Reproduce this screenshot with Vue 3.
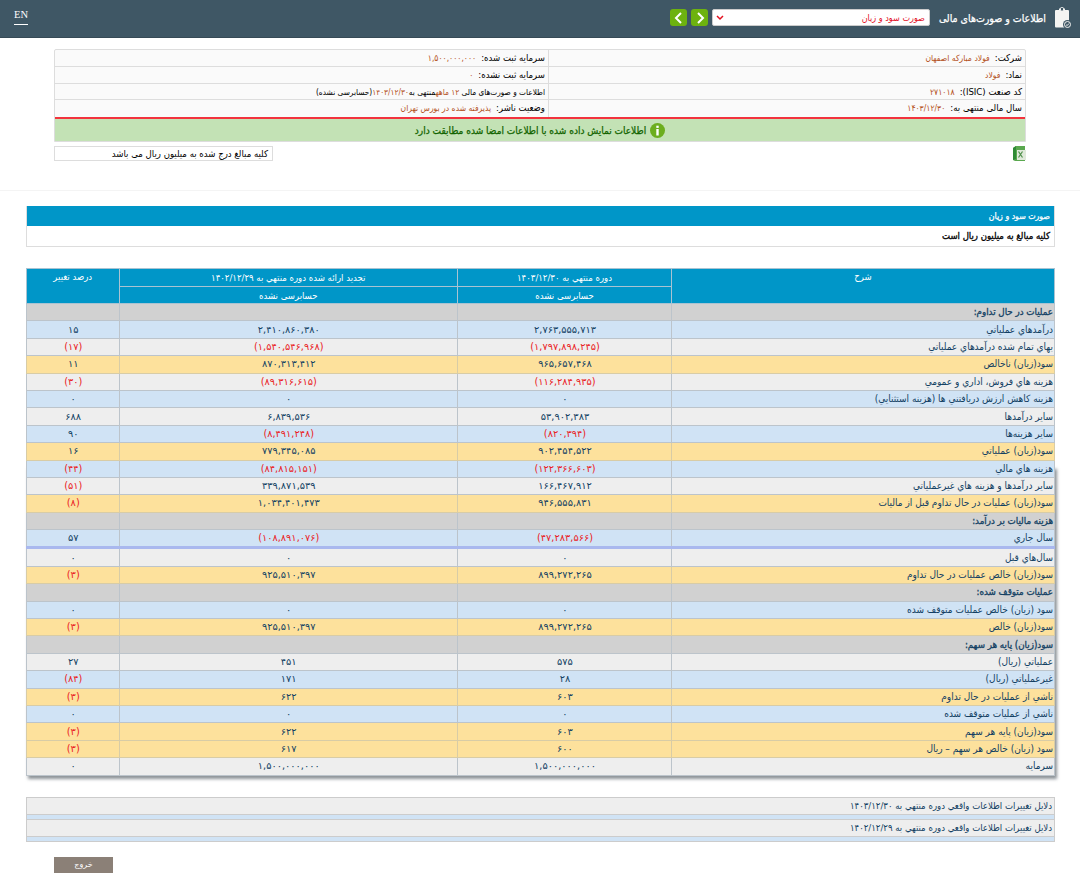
<template>
  <div class="page" dir="rtl">
    <header class="topbar">
      <svg class="clip" width="18" height="22" viewBox="0 0 18 22">
        <path d="M2 3h3V1.500h6V3h3a1 1 0 0 1 1 1v15.500a1 1 0 0 1-1 1H2a1 1 0 0 1-1-1V4a1 1 0 0 1 1-1z" fill="#f4f4f2" />
        <rect x="6.500" y="0.500" width="3" height="3.500" rx="1" fill="#3f5765" stroke="#f4f4f2" />
        <circle cx="13.500" cy="17.500" r="4.500" fill="#3f5765" />
        <circle cx="13.500" cy="17.500" r="3" fill="none" stroke="#f4f4f2" />
        <path d="M12.200 17.800l1 .8 1.600-2" fill="none" stroke="#f4f4f2" />
      </svg>
      <span class="title">اطلاعات و صورت‌های مالی</span>
      <div class="select">
        <span>صورت سود و زیان</span>
        <svg width="8" height="6" viewBox="0 0 8 6"><path d="M1 1l3 3 3-3" fill="none" stroke="#e3101f" stroke-width="1.500" /></svg>
      </div>
      <button class="nav">
        <svg width="10" height="12" viewBox="0 0 10 12"><path d="M3 1l5 5-5 5" fill="none" stroke="#fff" stroke-width="2" /></svg>
      </button>
      <button class="nav">
        <svg width="10" height="12" viewBox="0 0 10 12"><path d="M7 1L2 6l5 5" fill="none" stroke="#fff" stroke-width="2" /></svg>
      </button>
      <a class="lang">EN</a>
    </header>

    <section class="info">
      <div class="info-row" v-for="row in infoRows" :key="row[0]">
        <div class="info-cell"><b>{{ row[0] }}</b><span class="val">{{ row[1] }}</span></div>
        <div class="info-cell" v-if="row[2]"><b>{{ row[2] }}</b><span class="val">{{ row[3] }}</span></div>
        <div class="info-cell small" v-else>
          اطلاعات و صورت‌های مالی <span class="val">۱۲ ماهه</span>منتهی به<span class="val">۱۴۰۳/۱۲/۳۰</span>(حسابرسی نشده)
        </div>
      </div>
      <div class="notice">
        <svg width="15" height="15" viewBox="0 0 15 15">
          <circle cx="7.500" cy="7.500" r="7.500" fill="#6cae1e" />
          <rect x="6.300" y="6" width="2.400" height="6.500" fill="#fff" />
          <rect x="6.300" y="2.700" width="2.400" height="2.200" fill="#fff" />
        </svg>
        <span>اطلاعات نمایش داده شده با اطلاعات امضا شده مطابقت دارد</span>
      </div>
    </section>

    <div class="tools">
      <svg width="14" height="15" viewBox="0 0 14 15">
        <path d="M1 2l3-2h9v15H3l-2-1z" fill="#5aa84f" />
        <path d="M1 2l3-2v13l-3 1z" fill="#2f8a35" />
        <rect x="5" y="4" width="9" height="10" fill="#dfe9da" />
        <path d="M6.500 5.500l4 6M10.500 5.500l-4 6" stroke="#4e8f4a" stroke-width="1.200" />
      </svg>
      <div class="unit">کلیه مبالغ درج شده به میلیون ریال می باشد</div>
    </div>

    <div class="sep"></div>

    <section class="report">
      <h2>صورت سود و زیان</h2>
      <p>کلیه مبالغ به میلیون ریال است</p>
    </section>

    <div class="table-wrap">
      <table class="sheet">
        <colgroup>
          <col class="c1" />
          <col class="c2" />
          <col class="c3" />
          <col class="c4" />
        </colgroup>
        <thead>
          <tr class="first">
            <th rowspan="2" class="top">شرح</th>
            <th>دوره منتهي به ۱۴۰۳/۱۲/۳۰</th>
            <th>تجديد ارائه شده دوره منتهي به ۱۴۰۲/۱۲/۲۹</th>
            <th rowspan="2" class="top">درصد تغيير</th>
          </tr>
          <tr>
            <th>حسابرسی نشده</th>
            <th>حسابرسی نشده</th>
          </tr>
        </thead>
        <tbody>
          <tr v-for="row in rows" :key="row.label" :class="[row.kind, { mark: row.mark }]">
            <td class="label">{{ row.label }}</td>
            <td v-for="(v, i) in row.values" :key="i" class="num" :class="{ neg: v.startsWith('(') }">{{ v }}</td>
          </tr>
        </tbody>
      </table>
    </div>

    <section class="reasons">
      <div class="reason" v-for="r in reasons" :key="r">
        <div class="reason-text">{{ r }}</div>
        <div class="reason-foot"></div>
      </div>
    </section>

    <div class="actions">
      <button class="exit">خروج</button>
    </div>
  </div>
</template>

<script setup>
const infoRows = [
  ['شرکت:', 'فولاد مبارکه اصفهان', 'سرمایه ثبت شده:', '۱,۵۰۰,۰۰۰,۰۰۰'],
  ['نماد:', 'فولاد', 'سرمایه ثبت نشده:', '۰'],
  ['کد صنعت (ISIC):', '۲۷۱۰۱۸'],
  ['سال مالی منتهی به:', '۱۴۰۳/۱۲/۳۰', 'وضعیت ناشر:', 'پذیرفته شده در بورس تهران']
]

const r = (kind, label, a, b, c, mark) => ({ kind, label, values: [a, b, c], mark })
const head = (label) => r('head', label, '', '', '')

const rows = [
  head('عمليات در حال تداوم:'),
  r('blue', 'درآمدهاي عملياتي', '۲,۷۶۳,۵۵۵,۷۱۳', '۲,۴۱۰,۸۶۰,۳۸۰', '۱۵'),
  r('grey', 'بهاي تمام شده درآمدهاي عملياتي', '(۱,۷۹۷,۸۹۸,۲۴۵)', '(۱,۵۴۰,۵۴۶,۹۶۸)', '(۱۷)'),
  r('gold', 'سود(زيان) ناخالص', '۹۶۵,۶۵۷,۴۶۸', '۸۷۰,۳۱۳,۴۱۲', '۱۱'),
  r('grey', 'هزينه هاي فروش، اداري و عمومي', '(۱۱۶,۲۸۴,۹۳۵)', '(۸۹,۳۱۶,۶۱۵)', '(۳۰)'),
  r('blue', 'هزينه كاهش ارزش دريافتني ها (هزينه استثنايي)', '۰', '۰', '۰'),
  r('grey', 'ساير درآمدها', '۵۳,۹۰۲,۳۸۳', '۶,۸۳۹,۵۳۶', '۶۸۸'),
  r('blue', 'ساير هزينه‌ها', '(۸۲۰,۳۹۴)', '(۸,۴۹۱,۲۴۸)', '۹۰'),
  r('gold', 'سود(زيان) عملياتي', '۹۰۲,۴۵۴,۵۲۲', '۷۷۹,۳۴۵,۰۸۵', '۱۶'),
  r('blue', 'هزينه هاي مالي', '(۱۲۲,۳۶۶,۶۰۳)', '(۸۴,۸۱۵,۱۵۱)', '(۴۴)'),
  r('grey', 'ساير درآمدها و هزينه هاي غيرعملياتي', '۱۶۶,۴۶۷,۹۱۲', '۳۳۹,۸۷۱,۵۳۹', '(۵۱)'),
  r('gold', 'سود(زيان) عمليات در حال تداوم قبل از ماليات', '۹۴۶,۵۵۵,۸۳۱', '۱,۰۳۴,۴۰۱,۴۷۳', '(۸)'),
  head('هزينه ماليات بر درآمد:'),
  r('blue', 'سال جاري', '(۴۷,۲۸۳,۵۶۶)', '(۱۰۸,۸۹۱,۰۷۶)', '۵۷'),
  r('grey', 'سال‌هاي قبل', '۰', '۰', '۰', true),
  r('gold', 'سود(زيان) خالص عمليات در حال تداوم', '۸۹۹,۲۷۲,۲۶۵', '۹۲۵,۵۱۰,۳۹۷', '(۳)'),
  head('عمليات متوقف شده:'),
  r('blue', 'سود (زيان) خالص عمليات متوقف شده', '۰', '۰', '۰'),
  r('gold', 'سود(زيان) خالص', '۸۹۹,۲۷۲,۲۶۵', '۹۲۵,۵۱۰,۳۹۷', '(۳)'),
  head('سود(زيان) پايه هر سهم:'),
  r('grey', 'عملياتي (ريال)', '۵۷۵', '۴۵۱', '۲۷'),
  r('blue', 'غيرعملياتي (ريال)', '۲۸', '۱۷۱', '(۸۴)'),
  r('gold', 'ناشي از عمليات در حال تداوم', '۶۰۳', '۶۲۲', '(۳)'),
  r('blue', 'ناشي از عمليات متوقف شده', '۰', '۰', '۰'),
  r('gold', 'سود(زيان) پايه هر سهم', '۶۰۳', '۶۲۲', '(۳)'),
  r('gold', 'سود (زيان) خالص هر سهم – ريال', '۶۰۰', '۶۱۷', '(۳)'),
  r('grey', 'سرمايه', '۱,۵۰۰,۰۰۰,۰۰۰', '۱,۵۰۰,۰۰۰,۰۰۰', '۰')
]

const reasons = [
  'دلايل تغييرات اطلاعات واقعي دوره منتهي به ۱۴۰۳/۱۲/۳۰',
  'دلايل تغييرات اطلاعات واقعي دوره منتهي به ۱۴۰۲/۱۲/۲۹'
]
</script>

<style>
body {
  margin: 0;
  background: #fff;
}
</style>

<style scoped>
.page {
  font-family: "DejaVu Sans", Tahoma, sans-serif;
  font-stretch: condensed;
  font-size: 9.5px;
  color: #000;
  height: 873px;
  overflow: hidden;
}

.topbar {
  height: 38px;
  box-sizing: border-box;
  background: #3f5765;
  border-bottom: 1px solid #364a56;
  display: flex;
  align-items: center;
  padding: 0 8px 2px 14px;
}

.title {
  flex: none;
  width: 107px;
  white-space: nowrap;
  color: #fff;
  font-size: 10.500px;
  -webkit-text-stroke: 0.25px #fff;
  margin-right: 8px;
}

.select {
  width: 218px;
  height: 17px;
  box-sizing: border-box;
  margin-right: 9px;
  background: #fff;
  border: 1px solid #ccc;
  border-radius: 2px;
  color: #e3101f;
  font-size: 9px;
  display: flex;
  align-items: center;
  justify-content: space-between;
  padding: 0 4px 0 3px;
}

.nav {
  width: 17px;
  height: 17px;
  margin-right: 4px;
  padding: 0;
  border: none;
  border-radius: 3px;
  background: #6db20f;
  display: flex;
  align-items: center;
  justify-content: center;
}

.lang {
  margin-right: auto;
  color: #fff;
  font-family: "Liberation Serif", serif;
  font-stretch: normal;
  font-size: 10.5px;
  line-height: 11px;
  padding-bottom: 4px;
  margin-top: -1px;
  border-bottom: 1px solid #fff;
}

.info {
  margin: 11px 54px 0 54px;
  border: 1px solid #ddd;
  border-radius: 2px 2px 0 0;
  background: #fafafa;
}

.info-row {
  display: grid;
  grid-template-columns: 476px 1fr;
  height: 16.750px;
  border-bottom: 1px solid #ddd;
  box-sizing: border-box;
}

.info-row:nth-child(4) {
  border-bottom: none;
}

.info-cell {
  padding: 0 3px;
  line-height: 16px;
  white-space: nowrap;
}

.info-cell + .info-cell {
  border-right: 1px solid #ddd;
}

.info-cell b {
  font-weight: normal;
  margin-left: 5px;
}

.val {
  color: #b4511c;
  font-size: 8.500px;
}

.small {
  font-size: 8.200px;
}

.small .val {
  font-size: 8.200px;
}

.notice {
  height: 24px;
  box-sizing: border-box;
  background: #c3e2b5;
  border-top: 2px solid #f2333d;
  display: flex;
  align-items: center;
  justify-content: center;
  gap: 4px;
  color: #126400;
  font-size: 10px;
  -webkit-text-stroke: 0.25px #126400;
}

.tools {
  margin: 4px 54px 0 54px;
  display: flex;
  justify-content: space-between;
  align-items: flex-start;
}

.unit {
  width: 219px;
  height: 15px;
  box-sizing: border-box;
  border: 1px solid #ddd;
  padding: 0 4px;
  line-height: 13px;
}

.sep {
  margin-top: 29px;
  border-top: 1px solid #f4f4f4;
}

.report {
  margin: 15px 25px 0 26px;
  border: 1px solid #ddd;
  border-top: none;
}

.report h2 {
  margin: 0;
  height: 20px;
  background: #0096c8;
  color: #fff;
  font-size: 8.700px;
  font-weight: normal;
  -webkit-text-stroke: 0.25px #fff;
  line-height: 20px;
  padding: 0 4px;
}

.report p {
  margin: 0;
  height: 20px;
  background: #fff;
  font-size: 9.500px;
  -webkit-text-stroke: 0.3px #000;
  line-height: 20px;
  padding: 0 4px;
}

.table-wrap {
  margin: 21px 25px 0 26px;
  position: relative;
}

/* the shadow only shows on the lower part of the table */
.table-wrap::before {
  content: "";
  position: absolute;
  top: 198px;
  right: 0;
  bottom: 0;
  left: 0;
  box-shadow: 2px 3px 3px rgba(50, 60, 70, 0.55);
}

.sheet {
  position: relative;
  width: 100%;
  border-collapse: collapse;
  table-layout: fixed;
}

.c1 {
  width: 383px;
}

.c2 {
  width: 214px;
}

.c3 {
  width: 338.500px;
}

.sheet th {
  background: #0096c8;
  color: #fff;
  font-weight: normal;
  height: 16px;
  padding: 0;
  border: 1px solid #a9c3d2;
  text-align: center;
}

.first th {
  height: 17px;
}

.sheet th.top {
  vertical-align: top;
  padding-top: 2px;
}

.sheet td {
  height: 16.400px;
  padding: 0 1px 0 2px;
  border: 1px solid #bcc4cb;
  color: #123f63;
  font-size: 10px;
  white-space: nowrap;
  line-height: 12px;
}

.sheet td.num {
  text-align: center;
  direction: ltr;
  font-stretch: normal;
  font-size: 9.800px;
}

.sheet td.neg {
  color: #ea1c24;
}

.head td {
  background: #d1d1d1;
  font-size: 9.700px;
  -webkit-text-stroke: 0.3px #123f63;
}

.blue td {
  background: #d0e3f5;
}

.grey td {
  background: #eeeeee;
}

.gold td {
  background: #fde19c;
  border-color: #d8cca6;
}

.mark td {
  border-top: 3px solid #a9b8ee;
}

.reasons {
  margin: 21px 25px 0 26px;
  border: 1px solid #ccc;
  border-top: none;
}

.reason-text {
  height: 16px;
  background: #eeeeee;
  border-top: 1px solid #ccc;
  border-bottom: 1px solid #ccc;
  padding: 0 2px;
  line-height: 16px;
  color: #123f63;
}

.reason-foot {
  height: 4px;
  background: #d0e3f5;
}

.actions {
  margin: 15px 54px 0 54px;
  display: flex;
  justify-content: flex-end;
}

.exit {
  width: 59px;
  height: 16px;
  padding: 0;
  border: none;
  background: #8b8077;
  color: #fff;
  font-family: inherit;
  font-size: 8px;
}
</style>
